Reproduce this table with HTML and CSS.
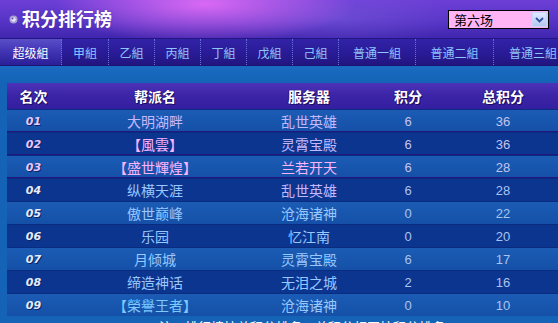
FILE: index.html
```html
<!DOCTYPE html>
<html lang="zh">
<head>
<meta charset="utf-8">
<title>积分排行榜</title>
<link rel="stylesheet" href="styles.css">
</head>
<body>
<div class="page">
  <div class="top">
    <div class="title">
      <svg class="ticon" width="9" height="9" viewBox="0 0 9 9"><circle cx="4.5" cy="4.5" r="4" fill="#a8a0d0"/><circle cx="4.5" cy="4.5" r="2.2" fill="#e8e4ff"/><circle cx="3.6" cy="3.6" r="1" fill="#6850b0"/></svg>
      <span>积分排行榜</span>
    </div>
    <div class="sel">
      <span class="sel-text">第六场</span>
      <span class="sel-btn"><svg width="9" height="6" viewBox="0 0 9 6"><path d="M1 1 L4.5 4.5 L8 1" fill="none" stroke="#3050a0" stroke-width="1.8"/></svg></span>
    </div>
  </div>
  <div class="tabs">
    <div class="tab active w62">超级組</div>
    <div class="tab w47">甲組</div>
    <div class="tab w46">乙組</div>
    <div class="tab w46">丙組</div>
    <div class="tab w46">丁組</div>
    <div class="tab w46">戊組</div>
    <div class="tab w46">己組</div>
    <div class="tab w77">普通一組</div>
    <div class="tab w78">普通二組</div>
    <div class="tab w78 last">普通三組</div>
  </div>
  <div class="panel">
    <div class="grid thead">
      <div>名次</div><div>帮派名</div><div>服务器</div><div>积分</div><div>总积分</div>
    </div>
    <div class="grid row odd top"><div class="rk">01</div><div class="c-lav">大明湖畔</div><div class="c-lav">乱世英雄</div><div class="c-num">6</div><div class="c-num">36</div></div>
    <div class="grid row even top"><div class="rk">02</div><div class="c-pink">【風雲】</div><div class="c-lav">灵霄宝殿</div><div class="c-num">6</div><div class="c-num">36</div></div>
    <div class="grid row odd top"><div class="rk">03</div><div class="c-pink">【盛世輝煌】</div><div class="c-pink">兰若开天</div><div class="c-num">6</div><div class="c-num">28</div></div>
    <div class="grid row even"><div class="rk">04</div><div class="c-blue">纵横天涯</div><div class="c-lav">乱世英雄</div><div class="c-num">6</div><div class="c-num">28</div></div>
    <div class="grid row odd"><div class="rk">05</div><div class="c-blue">傲世巅峰</div><div class="c-blue">沧海诸神</div><div class="c-num">0</div><div class="c-num">22</div></div>
    <div class="grid row even"><div class="rk">06</div><div class="c-blue">乐园</div><div class="c-blue">忆江南</div><div class="c-num">0</div><div class="c-num">20</div></div>
    <div class="grid row odd"><div class="rk">07</div><div class="c-blue">月倾城</div><div class="c-blue">灵霄宝殿</div><div class="c-num">6</div><div class="c-num">17</div></div>
    <div class="grid row even"><div class="rk">08</div><div class="c-blue">缔造神话</div><div class="c-blue">无泪之城</div><div class="c-num">2</div><div class="c-num">16</div></div>
    <div class="grid row odd"><div class="rk">09</div><div class="c-sky">【榮譽王者】</div><div class="c-blue">沧海诸神</div><div class="c-num">0</div><div class="c-num">10</div></div>
    <div class="note">注：排行榜按总积分排名，总积分相同按积分排名</div>
  </div>
</div>
</body>
</html>
```

FILE: styles.css
```css
html, body {
  margin: 0;
  padding: 0;
}
body {
  width: 558px;
  height: 323px;
  overflow: hidden;
  background: #1463b6;
  font-family: "Noto Sans CJK SC", "DejaVu Sans", sans-serif;
}
.page {
  width: 558px;
}
.top {
  height: 38px;
  border-bottom: 1px solid #241680;
  display: flex;
  align-items: flex-start;
  justify-content: space-between;
  background:
    radial-gradient(ellipse 150px 40px at 205px 4px, rgba(255,120,255,0.75), rgba(255,120,255,0) 100%),
    radial-gradient(ellipse 120px 30px at 340px 18px, rgba(140,110,230,0.35), rgba(140,110,230,0) 100%),
    linear-gradient(to bottom, #6d3fd6 0%, #5634c6 55%, #4026ae 100%);
}
.title {
  display: flex;
  align-items: center;
  gap: 4px;
  padding: 4px 0 0 9px;
  height: 28px;
  color: #ffffff;
  font-size: 18px;
  font-weight: bold;
  text-shadow: 0 0 2px #5030a0;
  line-height: 28px;
}
.ticon {
  margin-top: 3px;
}
.sel {
  margin: 10px 9px 0 0;
  width: 99px;
  height: 17px;
  border: 1px solid #000;
  background: #ffb4f6;
  display: flex;
  align-items: center;
  justify-content: space-between;
}
.sel-text {
  color: #000;
  font-size: 13px;
  line-height: 17px;
  padding-left: 5px;
}
.sel-btn {
  width: 15px;
  height: 15px;
  margin-right: 1px;
  background: linear-gradient(to bottom, #dfe8ff, #b4c8f0);
  border: 1px solid #c8d4f4;
  box-sizing: border-box;
  display: flex;
  align-items: center;
  justify-content: center;
}
.tabs {
  height: 27px;
  display: flex;
  background: linear-gradient(to bottom, #3122a8 0%, #2a1c98 50%, #221580 100%);
  border-bottom: 1px solid #1d1370;
  box-sizing: border-box;
}
.tab {
  flex: none;
  height: 100%;
  display: flex;
  align-items: center;
  justify-content: center;
  font-size: 12px;
  color: #8ec6ff;
  border-right: 1px dotted #6a70d8;
  box-sizing: border-box;
}
.tab.last { border-right: none; }
.tab.active {
  color: #ffffff;
  background: linear-gradient(to bottom, #5a4ec8 0%, #4236b6 45%, #2a1e98 100%);
}
.w62 { width: 62px; }
.w47 { width: 47px; }
.w46 { width: 46px; }
.w77 { width: 77px; }
.w78 { width: 78px; }
.panel {
  padding: 17px 0 0 7px;
  background: linear-gradient(to bottom, #1a6cc2 0px, #1463b6 16px);
}
.grid {
  display: grid;
  grid-template-columns: 53px 190px 118px 80px 110px;
  text-align: center;
  align-items: center;
}
.thead {
  height: 26px;
  background: linear-gradient(to bottom, #4c32b8 0%, #3c24a6 50%, #341ea0 100%);
  color: #fff;
  font-size: 14px;
  font-weight: bold;
  text-shadow: 1px 1px 0 #1a0c60, -1px 0 0 #2a1480;
}
.row {
  height: 23px;
  font-size: 14px;
  line-height: 23px;
}
.row.odd {
  background: linear-gradient(to bottom, #1b5cb4 0%, #1550a8 100%);
  border-top: 1px solid #0a2c80;
  box-sizing: border-box;
}
.row.even {
  background: #0c3590;
  border-top: 1px solid #0a2c80;
  box-sizing: border-box;
}
.rk {
  font-family: "DejaVu Sans", Verdana, sans-serif;
  font-weight: bold;
  font-style: italic;
  font-size: 11px;
  color: #e6ecff;
  text-shadow: 1px 1px 0 #0a2468;
}
.row.top .rk { color: #ecc8ff; }
.c-lav { color: #c4b8ff; }
.c-pink { color: #ffb4ff; }
.c-blue { color: #98c8ff; }
.c-sky { color: #7ccaff; }
.c-num {
  font-family: "Liberation Sans", Arial, sans-serif;
  font-size: 13px;
  color: #a8c4f0;
}
.row.top .c-num { color: #c4c4ee; }
.note {
  padding: 2px 0 0 152px;
  color: #ffffff;
  font-size: 13px;
  line-height: 18px;
}
```
